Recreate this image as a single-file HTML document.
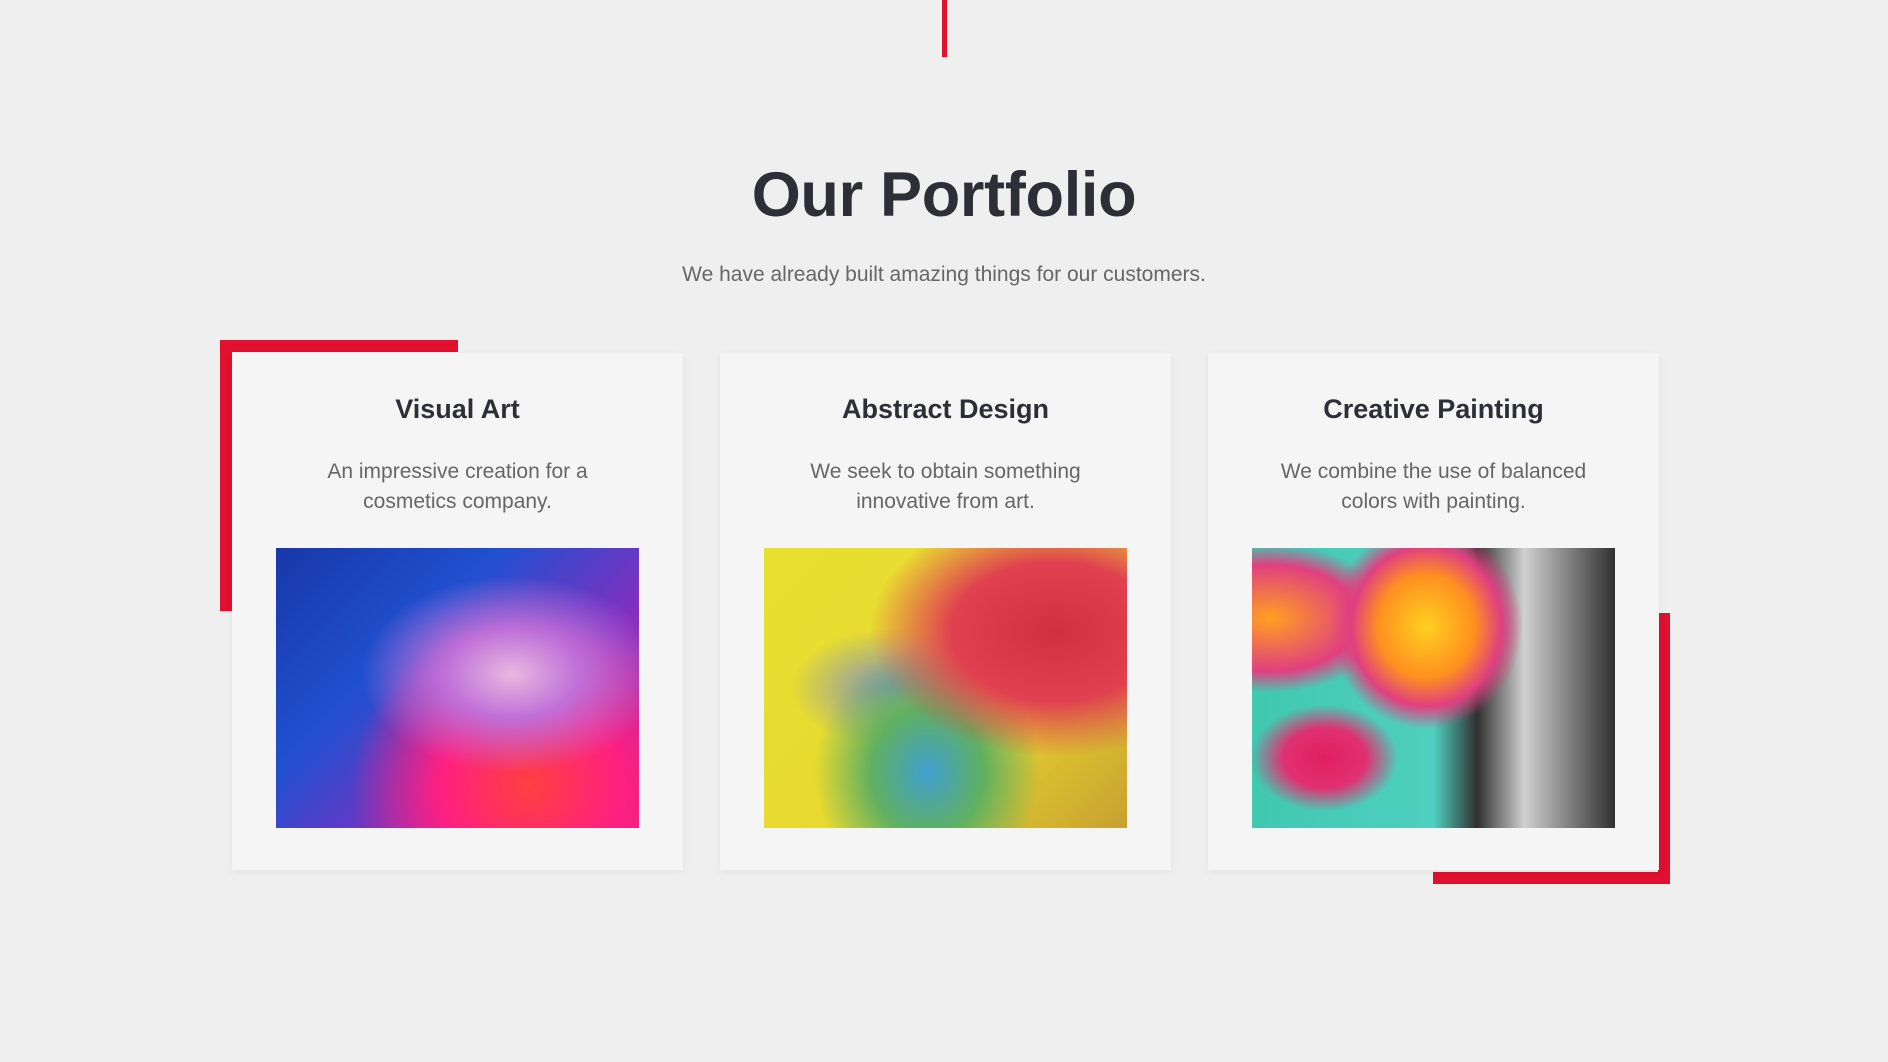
<!DOCTYPE html>
<html><head><meta charset="utf-8"><style>
*{margin:0;padding:0;box-sizing:border-box}
body{width:1888px;height:1062px;background:#efefef;font-family:"Liberation Sans",sans-serif;position:relative;overflow:hidden}
.vl{position:absolute;left:942px;top:0;width:5px;height:57px;background:#e0102f}
h1{position:absolute;top:159px;left:0;width:1888px;text-align:center;font-size:63px;font-weight:bold;color:#2e2e36;letter-spacing:-0.3px}
.sub{position:absolute;top:263px;left:0;width:1888px;text-align:center;font-size:21px;color:#666}
.r{position:absolute;background:#e0102f}
.card{position:absolute;top:353px;width:451px;height:517px;background:#f5f5f5;box-shadow:0 2px 8px rgba(0,0,0,.06);text-align:center}
.card h3{margin-top:41px;font-size:27px;color:#2e2e36;font-weight:bold}
.card p{margin:32px auto 0;width:340px;font-size:21px;line-height:30px;color:#666}
.img{position:absolute;left:44px;top:195px;width:363px;height:280px}
</style></head><body>
<div class="vl"></div>
<h1>Our Portfolio</h1>
<div class="sub">We have already built amazing things for our customers.</div>
<div class="r" style="left:220px;top:340px;width:238px;height:12px"></div>
<div class="r" style="left:220px;top:340px;width:12px;height:271px"></div>
<div class="r" style="left:1658px;top:613px;width:12px;height:271px"></div>
<div class="r" style="left:1433px;top:872px;width:237px;height:12px"></div>
<div class="card" style="left:232px"><h3>Visual Art</h3><p>An impressive creation for a cosmetics company.</p>
<div class="img" style="background:radial-gradient(ellipse at 65% 45%,#e8b8e0 0%,#c070d8 20%,transparent 45%),radial-gradient(ellipse at 70% 85%,#ff4040 0%,#ff2080 25%,transparent 50%),linear-gradient(135deg,#1838a8 0%,#2050d0 35%,#8030c0 65%,#e02080 100%)"></div></div>
<div class="card" style="left:720px"><h3>Abstract Design</h3><p>We seek to obtain something innovative from art.</p>
<div class="img" style="background:radial-gradient(ellipse at 80% 30%,#d03040 0%,#e04050 25%,transparent 45%),radial-gradient(ellipse at 45% 80%,#40a0d0 0%,#60b060 20%,transparent 40%),radial-gradient(ellipse at 35% 50%,#8090c0 0%,transparent 30%),linear-gradient(135deg,#e8e030 0%,#e8d830 60%,#c8a030 100%)"></div></div>
<div class="card" style="left:1208px"><h3>Creative Painting</h3><p>We combine the use of balanced colors with painting.</p>
<div class="img" style="background:radial-gradient(ellipse at 48% 28%,#ffd020 0%,#ff9020 18%,#e04080 28%,transparent 36%),radial-gradient(ellipse at 5% 25%,#ffa020 0%,#e04080 18%,transparent 25%),radial-gradient(ellipse at 20% 75%,#e02060 0%,#e03070 10%,transparent 18%),linear-gradient(90deg,#40c8b0 0%,#50d0c0 50%,#303030 62%,#d0d0d0 75%,#303030 100%)"></div></div>
</body></html>
